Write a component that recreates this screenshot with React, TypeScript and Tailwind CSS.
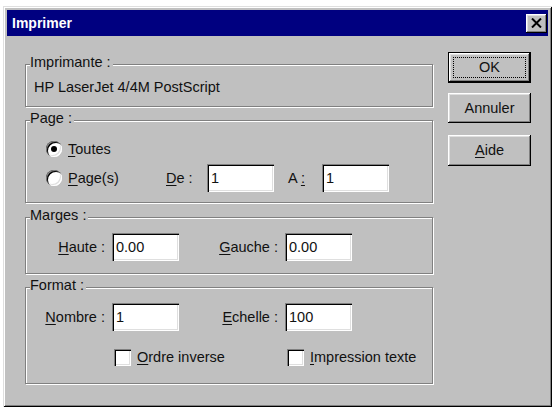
import React from "react";

const raised =
  "shadow-[inset_-1px_-1px_0_#000,inset_1px_1px_0_#fff,inset_-2px_-2px_0_#808080,inset_2px_2px_0_#dfdfdf]";
const sunken =
  "shadow-[inset_1px_1px_0_#808080,inset_2px_2px_0_#000,inset_-1px_-1px_0_#fff,inset_-2px_-2px_0_#dfdfdf]";

function Group({
  label,
  className,
  children,
}: {
  label: string;
  className: string;
  children?: React.ReactNode;
}) {
  return (
    <div
      className={
        "relative w-[408px] border border-[#808080] shadow-[inset_1px_1px_0_#fff,1px_1px_0_#fff] " +
        className
      }
    >
      <span className="absolute -top-[11px] left-[4px] bg-[#c0c0c0] pr-[2px] leading-[17px]">
        {label}
      </span>
      {children}
    </div>
  );
}

function Field({ value }: { value: string }) {
  return (
    <div
      className={
        "w-[67px] h-[28px] bg-white flex items-center pl-[4px] " + sunken
      }
    >
      {value}
    </div>
  );
}

function Radio({ checked }: { checked?: boolean }) {
  return (
    <div
      className={
        "w-[16px] h-[16px] rounded-full bg-white flex items-center justify-center " +
        sunken
      }
    >
      {checked && <div className="w-[6px] h-[6px] rounded-full bg-black" />}
    </div>
  );
}

function Check() {
  return <div className={"w-[17px] h-[17px] bg-white " + sunken} />;
}

function U({ c }: { c: string }) {
  return <span className="underline underline-offset-2">{c}</span>;
}

export default function App() {
  return (
    <div className="w-[554px] h-[409px] bg-white pt-[6px] pl-[3px] font-['Liberation_Sans',Arial,sans-serif] text-[14.5px] leading-[17px] text-[#111]">
      <div className="w-[549px] h-[401px] bg-[#c0c0c0] p-[4px] flex flex-col shadow-[inset_1px_1px_0_#dfdfdf,inset_-1px_-1px_0_#000,inset_2px_2px_0_#fff,inset_-2px_-2px_0_#808080]">
        {/* Title bar */}
        <div className="h-[26px] bg-[#000080] flex items-center justify-between pl-[5px] pr-[1px]">
          <span className="text-white font-bold text-[14px]">Imprimer</span>
          <div
            className={
              "w-[21px] h-[19px] bg-[#c0c0c0] flex items-center justify-center " +
              raised
            }
          >
            <svg width="11" height="10" viewBox="0 0 11 10">
              <path
                d="M1 0.5 L10 9.5 M10 0.5 L1 9.5"
                stroke="#000"
                strokeWidth="2"
                fill="none"
              />
            </svg>
          </div>
        </div>

        {/* Body */}
        <div className="flex pl-[18px]">
          <div className="w-[408px] flex flex-col pt-[28px]">
            <Group label="Imprimante :" className="h-[43px] pl-[8px] pt-[14px]">
              <div>HP LaserJet 4/4M PostScript</div>
            </Group>

            <Group label="Page :" className="h-[83px] mt-[13px] pt-[19px]">
              <div className="h-[18px] flex items-center pl-[20px]">
                <Radio checked />
                <span className="ml-[6px]">
                  <U c="T" />
                  outes
                </span>
              </div>
              <div className="h-[28px] mt-[6px] flex items-center pl-[20px]">
                <div className="w-[120px] flex items-center">
                  <Radio />
                  <span className="ml-[6px]">
                    <U c="P" />
                    age(s)
                  </span>
                </div>
                <span className="w-[41px]">
                  <U c="D" />e :
                </span>
                <Field value="1" />
                <span className="ml-[14px] w-[34px]">
                  A <U c=":" />
                </span>
                <Field value="1" />
              </div>
            </Group>

            <Group label="Marges :" className="h-[57px] mt-[14px] pt-[15px]">
              <div className="h-[28px] flex items-center">
                <span className="w-[79px] text-right">
                  <U c="H" />
                  aute :
                </span>
                <div className="ml-[7px]">
                  <Field value="0.00" />
                </div>
                <span className="w-[99px] text-right">
                  <U c="G" />
                  auche :
                </span>
                <div className="ml-[7px]">
                  <Field value="0.00" />
                </div>
              </div>
            </Group>

            <Group label="Format :" className="h-[97px] mt-[13px] pt-[15px]">
              <div className="h-[28px] flex items-center">
                <span className="w-[79px] text-right">
                  <U c="N" />
                  ombre :
                </span>
                <div className="ml-[7px]">
                  <Field value="1" />
                </div>
                <span className="w-[99px] text-right">
                  <U c="E" />
                  chelle :
                </span>
                <div className="ml-[7px]">
                  <Field value="100" />
                </div>
              </div>
              <div className="h-[18px] mt-[17px] flex items-center pl-[88px]">
                <div className="w-[173px] flex items-center">
                  <Check />
                  <span className="ml-[6px]">
                    <U c="O" />
                    rdre inverse
                  </span>
                </div>
                <div className="flex items-center">
                  <Check />
                  <span className="ml-[6px]">
                    <U c="I" />
                    mpression texte
                  </span>
                </div>
              </div>
            </Group>
          </div>

          {/* Buttons */}
          <div className="ml-[15px] pt-[16px] flex flex-col w-[83px]">
            <div className="h-[31px] border border-black bg-[#c0c0c0]">
              <div className={"w-full h-full p-[4px] flex " + raised}>
                <div className="flex-1 border border-dotted border-black flex items-center justify-center">
                  OK
                </div>
              </div>
            </div>
            <div
              className={
                "h-[30px] mt-[10px] bg-[#c0c0c0] flex items-center justify-center " +
                raised
              }
            >
              Annuler
            </div>
            <div
              className={
                "h-[31px] mt-[12px] bg-[#c0c0c0] flex items-center justify-center " +
                raised
              }
            >
              <span>
                <U c="A" />
                ide
              </span>
            </div>
          </div>
        </div>
      </div>
    </div>
  );
}
